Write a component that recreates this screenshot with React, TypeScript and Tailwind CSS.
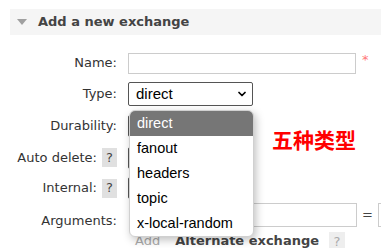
import React from "react";
import { ChevronDown } from "lucide-react";

const types = ["direct", "fanout", "headers", "topic", "x-local-random"];

function Help({ faded = false }: { faded?: boolean }) {
  return (
    <span
      className={
        faded
          ? "inline-flex h-[19px] w-[16px] items-center justify-center bg-[#eeeeee] text-[13px] text-[#aaaaaa]"
          : "inline-flex h-[19px] w-[15px] items-center justify-center bg-[#e0e0e0] text-[13px] text-[#444]"
      }
    >
      ?
    </span>
  );
}

function Row({
  label,
  help,
  h,
  children,
}: {
  label: string;
  help?: boolean;
  h: string;
  children?: React.ReactNode;
}) {
  return (
    <div className={`flex items-center ${h}`}>
      <div className="flex w-[117px] shrink-0 items-center justify-end gap-[5px] text-[13px] text-[#333]">
        <span>{label}</span>
        {help && <Help />}
      </div>
      <div className="ml-[11px] flex items-center">{children}</div>
    </div>
  );
}

function MiniSelect() {
  return <div className="h-[22px] w-[70px] rounded-[2px] border border-[#555] bg-white" />;
}

export default function App() {
  return (
    <div className="relative h-[248px] w-[381px] overflow-hidden bg-white font-['DejaVu_Sans',Verdana,sans-serif]">
      {/* section header */}
      <div className="ml-[10px] mt-[9px] flex h-[26px] items-center bg-[#f5f5f5]">
        <span className="ml-[7px] h-0 w-0 border-x-[5px] border-t-[6px] border-x-transparent border-t-[#a0a0a0]" />
        <span className="ml-[11px] text-[13px] font-bold text-[#444]">Add a new exchange</span>
      </div>

      <div className="mt-[13px]">
        <Row label="Name:" h="h-[30px]">
          <div className="h-[21px] w-[228px] shrink-0 border border-[#cccccc] bg-white" />
          <span className="ml-[6px] -mt-[6px] text-[13px] text-[#f77]">*</span>
        </Row>

        <Row label="Type:" h="h-[32px]">
          <div className="flex h-[24px] w-[125px] items-center justify-between rounded-[2px] border border-[#555] bg-white pl-[7px] pr-[4px] font-['Liberation_Sans',Arial,sans-serif] text-[15px] text-black">
            <span>direct</span>
            <ChevronDown size={12} strokeWidth={3.5} />
          </div>
        </Row>

        <Row label="Durability:" h="h-[32px]">
          <MiniSelect />
        </Row>
        <Row label="Auto delete:" help h="h-[31px]">
          <MiniSelect />
        </Row>
        <Row label="Internal:" help h="h-[30px]">
          <MiniSelect />
        </Row>

        <div className="flex h-[26px] items-start">
          <div className="w-[117px] shrink-0 pt-[8px] text-right text-[13px] text-[#333]">Arguments:</div>
          <div className="ml-[12px] flex shrink-0 items-center">
            <div className="h-[24px] w-[228px] shrink-0 border border-[#cccccc] bg-white" />
            <span className="ml-[5px] text-[13px] text-[#444]">=</span>
            <div className="ml-[5px] h-[24px] w-[20px] shrink-0 border border-[#cccccc] bg-white" />
          </div>
        </div>

        <div className="flex items-center">
          <span className="ml-[135px] shrink-0 text-[13px] text-[#aaaaaa]">Add</span>
          <span className="ml-[15px] shrink-0 text-[13px] font-bold text-[#444]">Alternate exchange</span>
          <span className="ml-[10px] shrink-0">
            <Help faded />
          </span>
        </div>
      </div>

      {/* open native dropdown */}
      <div className="absolute left-[129px] top-[110px] w-[125px] overflow-hidden rounded-[6px] border border-[#d0d0d0] bg-white font-['Liberation_Sans',Arial,sans-serif] text-[14.5px] shadow-[2px_3px_8px_rgba(0,0,0,0.25)]">
        {types.map((t, i) => (
          <div
            key={t}
            className={
              i === 0
                ? "flex h-[25px] items-center bg-[#767676] pl-[7px] text-white"
                : "flex h-[25px] items-center pl-[7px] text-black"
            }
          >
            {t}
          </div>
        ))}
      </div>

      {/* annotation */}
      <div className="absolute left-[272px] top-[129px] font-['Noto_Sans_CJK_SC',sans-serif] text-[21px] font-bold leading-none text-[#ff0000]">
        五种类型
      </div>
    </div>
  );
}
